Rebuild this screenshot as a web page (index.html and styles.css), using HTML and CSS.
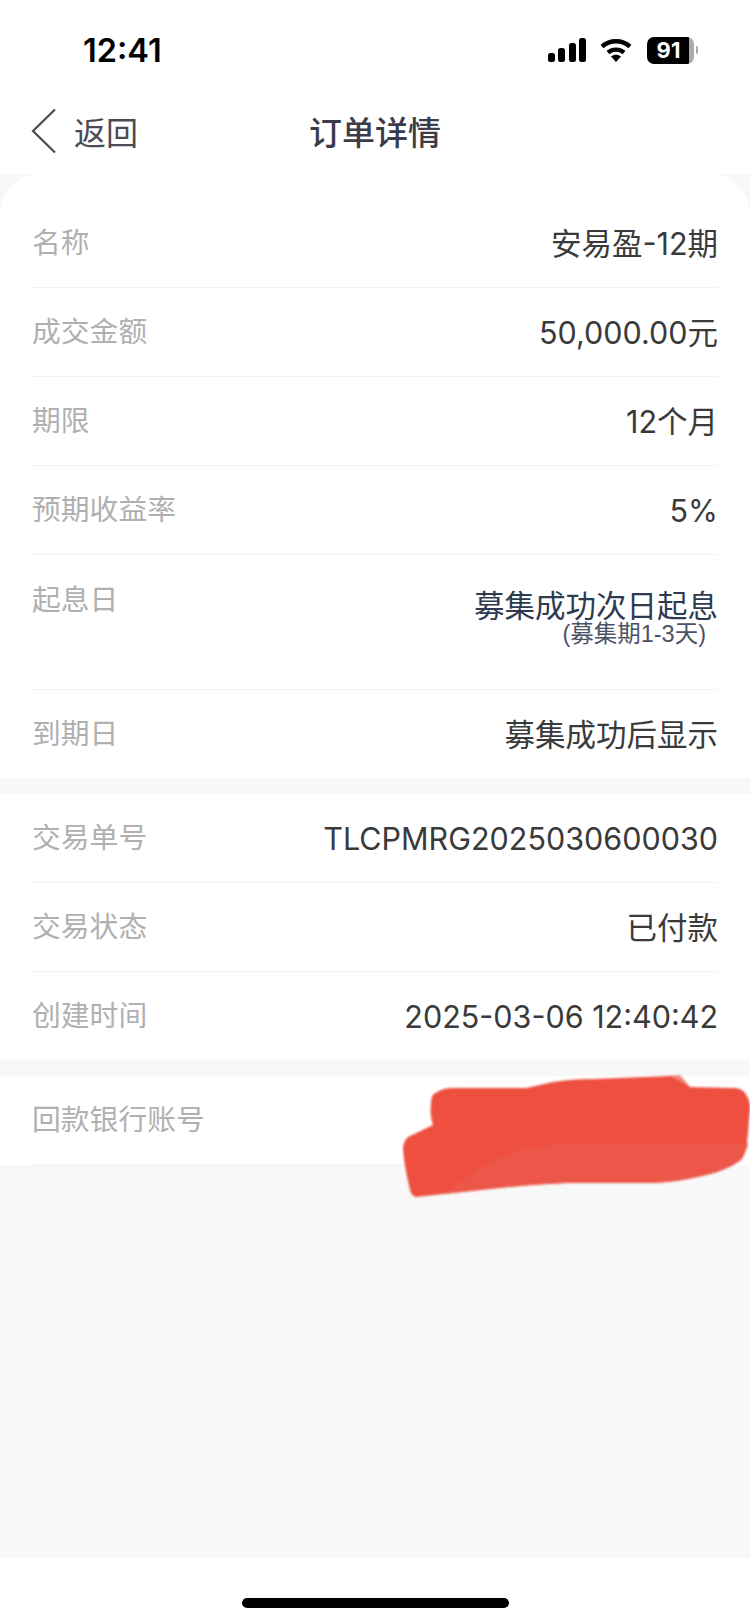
FILE: index.html
```html
<!DOCTYPE html>
<html lang="zh-CN">
<head>
    <meta charset="UTF-8">
    <meta name="viewport" content="width=device-width, initial-scale=1.0">
    <title>订单详情</title>
    <link rel="stylesheet" href="styles.css">
</head>
<body>

<div class="status-bar">
    <span class="clock">12:41</span>
    <div class="status-icons">
        <svg class="signal" width="38" height="24" viewBox="0 0 38 24">
            <rect x="0" y="15" width="7" height="9" rx="2.5"/>
            <rect x="10" y="10" width="7" height="14" rx="2.5"/>
            <rect x="21" y="5" width="7" height="19" rx="2.5"/>
            <rect x="31" y="0" width="7" height="24" rx="2.5"/>
        </svg>
        <svg class="wifi" width="32" height="24" viewBox="0 0 32 24">
            <path d="M2 8.500C10 1.500 22 1.500 30 8.500" fill="none" stroke="#000" stroke-width="4.400"/>
            <path d="M8 14.500C12.500 10.700 19.500 10.700 24 14.500" fill="none" stroke="#000" stroke-width="4.400"/>
            <path d="M11 18.500C14 16.200 18 16.200 21 18.500L16 24Z"/>
        </svg>
        <div class="battery"><span class="battery-level">91</span></div>
        <span class="battery-cap"></span>
    </div>
</div>

<div class="nav">
    <div class="back">
        <svg width="26" height="46" viewBox="0 0 26 46">
            <path d="M24 1.500L2 23L24 44.500" fill="none" stroke="#4a4a55" stroke-width="2.200"/>
        </svg>
        <span>返回</span>
    </div>
    <h1>订单详情</h1>
</div>

<div class="content">
    <div class="card card-top">
        <div class="row"><span class="label">名称</span><span class="value">安易盈-12期</span></div>
        <div class="row"><span class="label">成交金额</span><span class="value">50,000.00元</span></div>
        <div class="row"><span class="label">期限</span><span class="value">12个月</span></div>
        <div class="row"><span class="label">预期收益率</span><span class="value">5%</span></div>
        <div class="row row-tall">
            <span class="label">起息日</span>
            <div class="value-stack">
                <span class="value value-navy">募集成功次日起息</span>
                <span class="note">(募集期1-3天)</span>
            </div>
        </div>
        <div class="row"><span class="label">到期日</span><span class="value">募集成功后显示</span></div>
    </div>

    <div class="card">
        <div class="row"><span class="label">交易单号</span><span class="value">TLCPMRG2025030600030</span></div>
        <div class="row"><span class="label">交易状态</span><span class="value">已付款</span></div>
        <div class="row"><span class="label">创建时间</span><span class="value">2025-03-06 12:40:42</span></div>
    </div>

    <div class="card card-last">
        <div class="row"><span class="label">回款银行账号</span></div>
        <svg class="scribble" width="347" height="122" viewBox="0 0 347 122">
            <path d="M262 1L277 0L287 12L270 14Z" fill="#f28679"/>
            <path d="M28 30C28 22 30 18 33 18C38 14 44 13 50 13L123 13C133 11 141 9 150 7C163 5 176 4 190 4L268 1L287 12L330 13C336 13 340 15 342 18C345 22 347 27 347 32L345 58C344 70 342 80 338 85C328 92 316 97 303 100C283 105 263 108 243 108L163 108C134 109 105 112 77 115L13 122C10 121 8 119 7 115C4 102 1 88 0 75C0 69 2 65 5 62L30 50C28 44 27 37 28 30Z" fill="#ee4f3f"/>
            <path d="M60 105C80 90 102 78 127 72C155 69 183 68 210 68L345 68C344 74 341 81 338 85C328 92 316 97 303 100C283 105 263 108 243 108L163 108C134 109 105 112 77 115L40 119Z" fill="#ec5749"/>
        </svg>
    </div>
</div>

<div class="home-area">
    <div class="home-bar"></div>
</div>

</body>
</html>
```

FILE: styles.css
```css
html, body {
    margin: 0;
    padding: 0;
}
body {
    width: 750px;
    height: 1623px;
    display: flex;
    flex-direction: column;
    overflow: hidden;
    background-color: #fff;
    font-family: "Inter", "Noto Sans CJK SC", sans-serif;
    color: #333;
}
.status-bar {
    height: 88px;
    padding: 12px 52px 0 83px;
    box-sizing: border-box;
    display: flex;
    justify-content: space-between;
    align-items: center;
}
.clock {
    font-size: 32.5px;
    font-weight: 600;
    color: #000;
}
.status-icons {
    display: flex;
    align-items: center;
}
.signal {
    margin-right: 14px;
}
.wifi {
    margin-right: 15px;
}
.battery {
    width: 47px;
    height: 27px;
    border-radius: 7px;
    background: linear-gradient(to right, #000 90%, #aaa 90%);
    display: flex;
    align-items: center;
    justify-content: center;
    padding-right: 4px;
    box-sizing: border-box;
}
.battery-level {
    font-size: 22px;
    font-weight: 700;
    color: #fff;
}
.battery-cap {
    width: 2px;
    height: 8px;
    margin-left: 2px;
    border-radius: 0 2px 2px 0;
    background-color: #aaa;
}
.nav {
    height: 86px;
    position: relative;
    display: flex;
    align-items: center;
    justify-content: center;
}
.nav h1 {
    margin: 0;
    font-size: 33px;
    font-weight: 500;
    color: #3d3d49;
}
.back {
    position: absolute;
    left: 31px;
    top: 20px;
    display: flex;
    align-items: center;
    gap: 17px;
    font-size: 32px;
    color: #4a4a55;
}
.content {
    flex: 1;
    display: flex;
    flex-direction: column;
    gap: 16px;
    background-color: #f8f8f8;
}
.card {
    background-color: #fff;
    padding: 0 32px;
}
.card-top {
    border-radius: 40px 40px 0 0;
    padding-top: 25px;
}
.card-last {
    position: relative;
}
.row {
    display: flex;
    justify-content: space-between;
    align-items: flex-start;
    height: 89px;
    box-sizing: border-box;
    padding-top: 23px;
    border-bottom: 1px solid #f3f3f3;
}
.row:last-child {
    border-bottom: none;
    height: 88px;
}
.row-tall {
    height: 135px;
    padding-top: 24px;
}
.label {
    margin-top: 1px;
    font-size: 28.8px;
    line-height: 40px;
    color: #b0b0b0;
}
.value {
    font-size: 30.5px;
    line-height: 44px;
    color: #3a3a3a;
}
.value-navy {
    margin-top: 11px;
    line-height: 32px;
    color: #2e3a50;
}
.value-stack {
    display: flex;
    flex-direction: column;
    align-items: flex-end;
}
.note {
    margin-right: 12px;
    font-family: "Liberation Sans", "Noto Sans CJK SC", sans-serif;
    font-size: 23.5px;
    line-height: 24px;
    color: #4a5266;
}
.scribble {
    position: absolute;
    right: 0;
    top: -1px;
    filter: blur(1px);
}
.home-area {
    height: 65px;
    background-color: #fff;
    display: flex;
    justify-content: center;
}
.home-bar {
    width: 267px;
    height: 10px;
    margin-top: 40px;
    border-radius: 5px;
    background-color: #000;
}
```
